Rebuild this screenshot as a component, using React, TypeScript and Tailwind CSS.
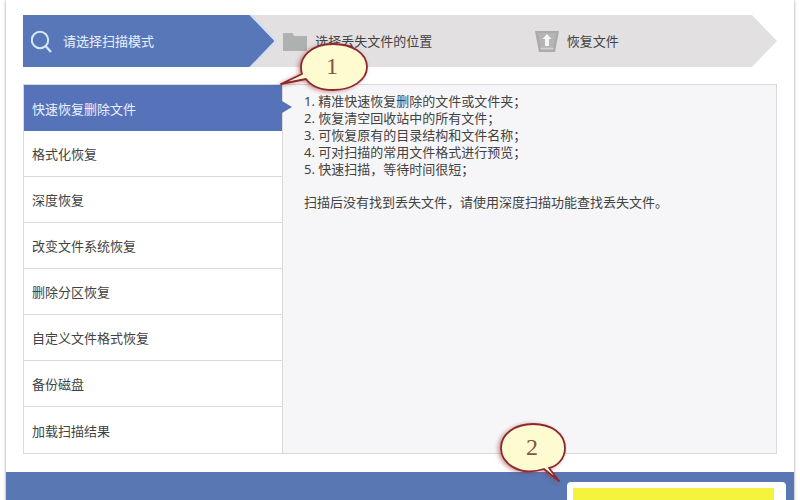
import React, { useState } from 'react';

const modes = [
  '快速恢复删除文件',
  '格式化恢复',
  '深度恢复',
  '改变文件系统恢复',
  '删除分区恢复',
  '自定义文件格式恢复',
  '备份磁盘',
  '加载扫描结果',
];

const features = [
  '精准快速恢复删除的文件或文件夹；',
  '恢复清空回收站中的所有文件；',
  '可恢复原有的目录结构和文件名称；',
  '可对扫描的常用文件格式进行预览；',
  '快速扫描，等待时间很短；',
];

const SearchIcon = () => (
  <svg width="22" height="24" viewBox="0 0 22 24" fill="none" stroke="#d3e6fb" strokeWidth="2">
    <circle cx="9" cy="10" r="8.2" />
    <path d="M14.500 16l5.500 6" strokeWidth="2.4" />
  </svg>
);

const FolderIcon = () => (
  <svg width="24" height="20" viewBox="0 0 24 20" fill="#adb1b0">
    <path d="M0 1h9.500l1.500 3h13v15H0z" />
  </svg>
);

const RecoverIcon = () => (
  <svg width="24" height="22" viewBox="0 0 24 22">
    <path d="M0 0h24l-4 21H4z" fill="#ababab" />
    <path d="M3 2h18l-3 17H6z" fill="#b5b5b5" />
    <path d="M12 3l4.500 5H14v7h-4V8H7.500z" fill="#f5f5f5" />
    <path d="M5.500 17.500h13" stroke="#d2d2d2" strokeWidth="1.500" />
  </svg>
);

interface CalloutProps {
  label: string;
  path: string;
  className: string;
}

// Speech balloon laid over the window, numbered in order of the clicks
const Callout: React.FC<CalloutProps> = ({ label, path, className }) => (
  <div className={`pointer-events-none absolute ${className}`}>
    <svg
      width="90"
      height="64"
      viewBox="0 0 90 64"
      className="overflow-visible drop-shadow-[-2px_1px_2px_rgba(150,50,50,0.5)]"
    >
      <path d={path} fill="#fefbd0" stroke="#8f2731" strokeWidth="1.800" strokeLinejoin="round" />
    </svg>
    <span className="absolute top-0 left-5 flex h-[46px] w-16 items-center justify-center font-['Liberation_Serif',serif] text-2xl text-[#85553f]">
      {label}
    </span>
  </div>
);

export default function App() {
  const [active, setActive] = useState(0);

  return (
    <div className="h-screen overflow-hidden bg-white px-[6px] font-['Noto_Sans','Noto_Sans_CJK_SC',sans-serif] text-[13px] text-[#424242]">
      <div className="relative flex min-h-full flex-col bg-white shadow-[0_0_3px_rgba(0,0,0,0.4)]">
        <main className="px-[17px] pt-[15px] pb-[18px]">
          {/* Steps */}
          <ol className="grid h-[52px] grid-cols-3 bg-[#e2e0e1] [clip-path:polygon(0_0,calc(100%-25px)_0,100%_50%,calc(100%-25px)_100%,0_100%)]">
            <li className="-mr-[3px] bg-[#d3def0] [clip-path:polygon(0_0,calc(100%-25px)_0,100%_50%,calc(100%-25px)_100%,0_100%)]">
              <div className="mr-[3px] flex h-full items-center gap-[10px] bg-[#5877b8] pt-[2px] pl-2 text-[#e8f1fd] [clip-path:polygon(0_0,calc(100%-25px)_0,100%_50%,calc(100%-25px)_100%,0_100%)]">
                <SearchIcon />
                请选择扫描模式
              </div>
            </li>
            <li className="flex items-center gap-2 pt-[2px] pl-[9px]">
              <FolderIcon />
              选择丢失文件的位置
            </li>
            <li className="flex items-center gap-2 pt-[2px] pl-[9px]">
              <RecoverIcon />
              恢复文件
            </li>
          </ol>

          {/* Mode list and description */}
          <div className="mt-[17px] flex border border-[#d9d9db] bg-[#f6f6f8]">
            <nav className="w-[259px] shrink-0 border-r border-[#d9d9db] bg-white">
              {modes.map((mode, i) => (
                <button
                  key={mode}
                  type="button"
                  onClick={() => setActive(i)}
                  className={`relative block h-[46px] w-full px-2 pt-[3px] text-left ${
                    i === active ? 'bg-[#5673ba] text-[#e8f1fd]' : 'border-b border-[#d9d9db] last:border-b-0'
                  }`}
                >
                  {mode}
                  {i === active && (
                    <span className="absolute top-4 left-full h-3 w-[10px] bg-[#5673ba] [clip-path:polygon(0_0,100%_50%,0_100%)]" />
                  )}
                </button>
              ))}
            </nav>
            <section className="grow px-[21px] pt-2 leading-[17px]">
              <ol>
                {features.map((text, i) => (
                  <li key={text}>
                    {i + 1}. {text}
                  </li>
                ))}
              </ol>
              <p className="mt-4">扫描后没有找到丢失文件，请使用深度扫描功能查找丢失文件。</p>
            </section>
          </div>
        </main>

        <footer className="flex grow items-start justify-end bg-[#5877b3] px-2 pt-[10px]">
          <button
            type="button"
            aria-label="下一步"
            className="h-12 w-[219px] rounded-[4px] border-6 border-r-12 border-white bg-[#f5f43c]"
          />
        </footer>

        <Callout
          label="1"
          className="top-[43px] left-[274px]"
          path="M22 31C17 14 32 1 53 1C72 1 87 10 87 24C87 37 72 47 53 47C41 47 31 43 26 36L1 41L22 31Z"
        />
        <Callout
          label="2"
          className="top-[424px] left-[474px]"
          path="M64 45C39 53 21 39 21 24C21 10 35 0 53 0C72 0 85 10 85 24C85 34 78 42 69 44L79 57L64 45Z"
        />
      </div>
    </div>
  );
}
